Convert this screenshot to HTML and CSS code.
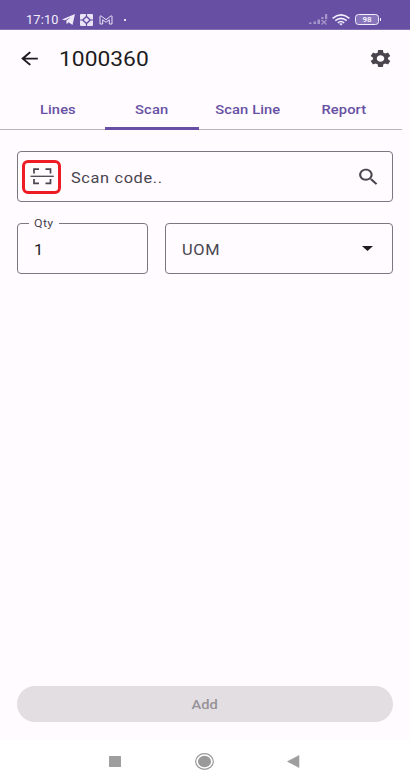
FILE: index.html
```html
<!DOCTYPE html>
<html lang="en">
<head>
<meta charset="utf-8">
<title>1000360</title>
<link rel="stylesheet" href="styles.css">
</head>
<body>
<div class="screen">
  <div class="status">
    <span class="time"><span class="wide">17:10</span></span>
    <svg class="telegram" width="13" height="11" viewBox="0 0 13 11"><path d="M0 5.500 13 0 10.500 11 6.500 8.300 4.700 10.300 4.300 6.800 9 3.300 3 6.300z" fill="#eee8f8"/></svg>
    <svg class="app" width="13" height="12" viewBox="0 0 13 12"><rect width="13" height="12" rx="1" fill="#e9e2f5"/><path d="M6.500 1.500 11.300 6 6.500 10.500 1.700 6z" fill="#6750a3"/><path d="M6.500 3.500 9.200 6 6.500 8.500 3.800 6z" fill="#e9e2f5"/><path d="M6.500 0V2M6.500 10V12M0 6H2M11 6H13" stroke="#6750a3" stroke-width="1.200"/></svg>
    <svg class="mail" width="14" height="10" viewBox="0 0 14 10"><path d="M1 9V1.500Q1 .6 2 .9L7 4.700 12 .9Q13 .6 13 1.500V9H10.300V4.800L7 7.300 3.700 4.800V9z" fill="none" stroke="#e9e2f5" stroke-width="1"/></svg>
    <span class="dot"></span>
    <svg class="signal" width="19" height="11" viewBox="0 0 19 11"><g fill="#a596cc"><path d="M0 8.500h2.500V10H0zM4.500 7.500H7V10H4.500zM8.500 5.500H11V10H8.500zM12.300 3H14.500V5H12.300zM16 0h2.200v5H16z"/></g><path d="m12.500 6 5 4.500m0-4.500-5 4.500" stroke="#a596cc" stroke-width="1.300"/></svg>
    <svg class="wifi" width="18" height="12" viewBox="0 0 18 12"><g fill="none" stroke="#f5f0ff" stroke-width="1.500"><path d="M.6 4.300Q9-2.600 17.400 4.300"/><path d="M3.300 6.700Q9 2 14.700 6.700"/><path d="M5.800 8.900Q9 6.200 12.200 8.900"/></g><path d="M7.200 9.800Q9 8.500 10.800 9.800L9 11.600z" fill="#f5f0ff"/></svg>
    <span class="battery"><span>98</span></span>
  </div>

  <header class="toolbar">
    <svg class="back" width="25" height="21" viewBox="0 0 24 24" preserveAspectRatio="none"><path d="M20 11H7.830l5.590-5.590L12 4l-8 8 8 8 1.410-1.410L7.830 13H20z" fill="#1d1b20"/></svg>
    <h1><span class="wide">1000360</span></h1>
    <svg class="gear" width="25" height="21" viewBox="0 0 24 24" preserveAspectRatio="none"><path fill="#49454f" d="M19.140 12.940c.04-.3.060-.61.060-.94 0-.32-.02-.64-.07-.94l2.030-1.580c.18-.14.230-.41.120-.61l-1.920-3.320c-.12-.22-.37-.29-.59-.22l-2.390.96c-.5-.38-1.030-.7-1.620-.94l-.36-2.540c-.04-.24-.24-.41-.48-.41h-3.840c-.24 0-.43.170-.47.410l-.36 2.540c-.59.240-1.130.570-1.620.940l-2.390-.96c-.22-.08-.47 0-.59.220L2.740 8.870c-.12.210-.08.470.120.610l2.030 1.580c-.05.300-.09.630-.09.940s.02.640.070.940l-2.030 1.580c-.18.140-.23.410-.12.610l1.920 3.320c.12.220.37.290.59.220l2.390-.96c.5.380 1.030.7 1.620.94l.36 2.540c.05.240.24.410.48.410h3.840c.24 0 .44-.17.470-.41l.36-2.540c.59-.24 1.130-.56 1.620-.94l2.390.96c.22.080.47 0 .59-.22l1.920-3.320c.12-.22.070-.47-.12-.61zM12 15.600c-1.980 0-3.600-1.620-3.600-3.600s1.620-3.600 3.600-3.600 3.600 1.620 3.600 3.600-1.620 3.600-3.600 3.600z"/></svg>
  </header>

  <nav class="tabs">
    <a><span class="wide">Lines</span></a>
    <a class="active"><span class="wide">Scan</span></a>
    <a><span class="wide">Scan Line</span></a>
    <a><span class="wide">Report</span></a>
  </nav>

  <main>
    <div class="field search">
      <span class="scan"><svg width="24" height="17" viewBox="0 0 24 17"><path d="M4 5.500V1.200H9M15.500 1.200H20.500V5.500M20.500 11V15.300H15.500M9 15.300H4V11" fill="none" stroke="#49454f" stroke-width="1.700"/><path d="M.5 8.300H23.800" stroke="#49454f" stroke-width="1.300"/></svg></span>
      <span class="wide placeholder">Scan code..</span>
      <svg class="lens" width="25" height="22" viewBox="0 0 24 24" preserveAspectRatio="none"><path fill="#49454f" d="M15.500 14h-.79l-.28-.27C15.410 12.590 16 11.110 16 9.500 16 5.910 13.090 3 9.500 3S3 5.910 3 9.500 5.910 16 9.500 16c1.610 0 3.090-.59 4.230-1.570l.27.280v.79l5 4.990L20.490 19l-4.990-5zm-6 0C7.010 14 5 11.990 5 9.500S7.010 5 9.500 5 14 7.010 14 9.500 11.990 14 9.500 14z"/></svg>
    </div>
    <div class="row">
      <div class="field qty"><span class="label"><span class="wide">Qty</span></span><span class="wide">1</span></div>
      <div class="field uom"><span class="wide">UOM</span><svg width="11" height="5" viewBox="0 0 11 5"><path d="M0 0h11L5.500 5z" fill="#1d1b20"/></svg></div>
    </div>
    <button class="add"><span class="wide">Add</span></button>
  </main>

  <footer class="system">
    <svg width="12" height="11" viewBox="0 0 12 11"><rect width="12" height="11" rx=".5" fill="#9e9e9e"/></svg>
    <svg width="19" height="17" viewBox="0 0 19 17"><ellipse cx="9.500" cy="8.500" rx="8.800" ry="7.800" fill="none" stroke="#9a9a9a" stroke-width="1.200"/><ellipse cx="9.500" cy="8.500" rx="6.500" ry="5.700" fill="#9a9a9a"/></svg>
    <svg width="13" height="13" viewBox="0 0 13 13"><path d="M.5 6.500 12 .5V12.500z" fill="#9e9e9e" stroke="#9e9e9e" stroke-width=".6" stroke-linejoin="round"/></svg>
  </footer>
</div>
</body>
</html>
```
FILE: styles.css
```css
* { box-sizing: border-box; }
body { margin: 0; font-family: Roboto, "Liberation Sans", sans-serif; background: #fffbff; }
svg { display: block; flex: none; }
.wide { display: inline-block; transform: scaleX(1.13); transform-origin: left center; white-space: nowrap; }
.screen { width: 410px; height: 782px; display: flex; flex-direction: column; overflow: hidden; color: #1d1b20; }

.status { height: 30px; background: #6750a3; border-bottom: 1px solid #8371b3; display: flex; align-items: center; padding: 10px 31px 0 26px; color: #f3eefc; flex: none; }
.time { width: 36px; font-size: 12px; line-height: 16px; letter-spacing: .2px; }
.time .wide { transform: scaleX(1.06); }
.app { margin-left: 5px; }
.mail { margin-left: 6px; }
.dot { width: 2px; height: 2px; margin-left: 11px; background: #e9e2f5; }
.signal { margin-left: auto; }
.wifi { margin-left: 4px; }
.battery { position: relative; width: 24px; height: 11px; margin-left: 5px; border: 1.5px solid #f3eefc; border-radius: 3.5px; background: #8874bb; font-size: 8px; font-weight: 700; line-height: 9px; text-align: center; }
.battery::after { content: ""; position: absolute; right: -3px; top: 3px; width: 1.5px; height: 3px; background: #f3eefc; }

.toolbar { height: 58px; display: flex; align-items: center; padding: 0 17px 1px; flex: none; }
h1 { margin: 0 auto 0 17px; padding-top: 1px; font-size: 20.3px; line-height: 26px; font-weight: 400; }
h1 .wide { transform: scaleX(1.125); }

.tabs { height: 42px; width: 402px; display: grid; grid-template-columns: 11px 94px 94px 98px 94px; border-bottom: 1px solid #b8b4bb; flex: none; }
.tabs a { display: flex; align-items: center; justify-content: center; height: 42px; font-size: 13px; font-weight: 500; color: #6750a3; letter-spacing: .1px; }
.tabs a:first-child { grid-column: 2; }
.tabs .active { border-bottom: 3px solid #6750a3; padding-top: 3px; }
.tabs .wide, .add .wide { transform-origin: center; }

main { flex: 1; display: flex; flex-direction: column; padding: 21px 17px 18px; }
.field { position: relative; height: 51px; border: 1px solid #7b7780; border-radius: 4px; display: flex; align-items: center; font-size: 14.5px; letter-spacing: .55px; color: #49454f; }
.field > .wide { padding-top: 3px; }
.scan { width: 39px; height: 34px; margin-left: 4px; border: 3px solid #ed1c24; border-radius: 6px; display: flex; align-items: center; justify-content: center; }
.placeholder { margin-left: 10px; }
.lens { margin: 0 11px 0 auto; }
.row { display: grid; grid-template-columns: 131px 228px; gap: 17px; margin-top: 21px; }
.qty { padding-left: 16px; color: #1d1b20; }
.label { position: absolute; left: 11px; top: -7px; width: 30px; padding-left: 5px; background: #fffbff; font-size: 11px; line-height: 14px; letter-spacing: .3px; color: #49454f; }
.uom { justify-content: space-between; padding: 0 19px 0 16px; }
.add { margin-top: auto; height: 36px; border: 0; border-radius: 18px; background: #e3dee2; color: #969298; font: 500 13px Roboto, "Liberation Sans", sans-serif; }

.system { height: 42px; flex: none; background: #fff; display: flex; align-items: center; gap: 74px; padding-left: 109px; }
.system svg:last-child { margin-left: -1px; }
```
